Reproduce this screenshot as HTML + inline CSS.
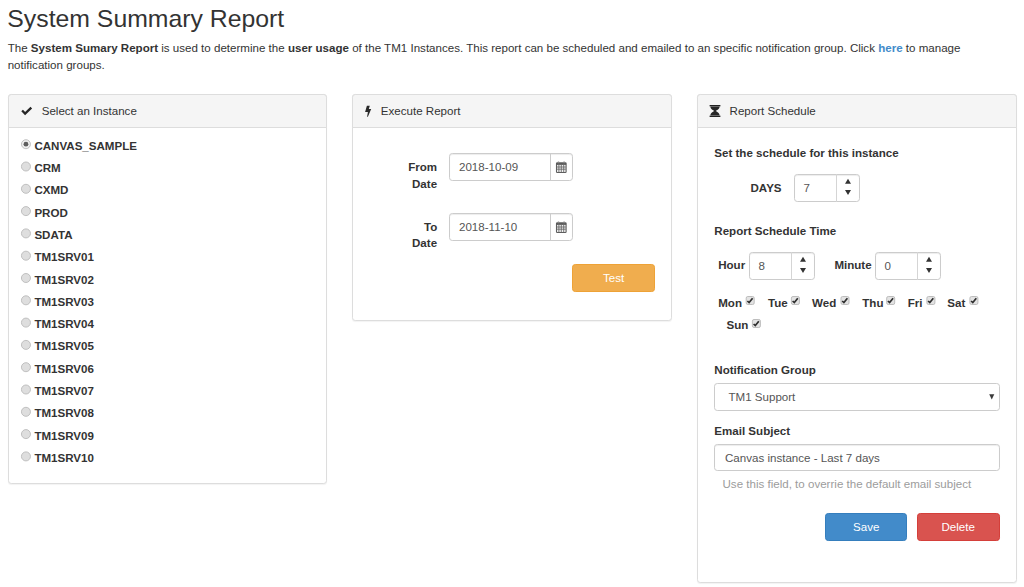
<!DOCTYPE html>
<html><head><meta charset="utf-8"><title>System Summary Report</title><style>
html,body{margin:0;padding:0;background:#fff;width:1024px;height:587px;overflow:hidden;position:relative}
body{font-family:"Liberation Sans",sans-serif;color:#333}
.t{position:absolute;white-space:nowrap;line-height:20px}
svg.ov{position:absolute;left:0;top:0;pointer-events:none}
</style></head><body>
<div class="t" style="left:7.3px;top:9px;font-size:24.8px;font-weight:normal;color:#333;">System Summary Report</div>
<div class="t" style="left:7.7px;top:38px;font-size:11.57px;font-weight:normal;color:#333;">The <b>System Sumary Report</b> is used to determine the <b>user usage</b> of the TM1 Instances. This report can be scheduled and emailed to an specific notification group. Click <b style="color:#428bca">here</b> to manage</div>
<div class="t" style="left:7.7px;top:55px;font-size:11.57px;font-weight:normal;color:#333;">notification groups.</div>
<div style="position:absolute;left:8px;top:94px;width:319px;height:390px;box-sizing:border-box;border:1px solid #ddd;border-radius:3.3px;background:#fff;box-shadow:0 1px 1px rgba(0,0,0,.05)"></div>
<div style="position:absolute;left:8px;top:94px;width:319px;height:34px;box-sizing:border-box;border:1px solid #ddd;border-radius:3.3px 3.3px 0 0;background:#f5f5f5"></div>
<div style="position:absolute;left:352px;top:94px;width:320px;height:227px;box-sizing:border-box;border:1px solid #ddd;border-radius:3.3px;background:#fff;box-shadow:0 1px 1px rgba(0,0,0,.05)"></div>
<div style="position:absolute;left:352px;top:94px;width:320px;height:34px;box-sizing:border-box;border:1px solid #ddd;border-radius:3.3px 3.3px 0 0;background:#f5f5f5"></div>
<div style="position:absolute;left:697px;top:94px;width:320px;height:489px;box-sizing:border-box;border:1px solid #ddd;border-radius:3.3px;background:#fff;box-shadow:0 1px 1px rgba(0,0,0,.05)"></div>
<div style="position:absolute;left:697px;top:94px;width:320px;height:34px;box-sizing:border-box;border:1px solid #ddd;border-radius:3.3px 3.3px 0 0;background:#f5f5f5"></div>
<div class="t" style="left:41.7px;top:101px;font-size:11.57px;font-weight:normal;color:#333;">Select an Instance</div>
<div class="t" style="left:380.8px;top:101px;font-size:11.57px;font-weight:normal;color:#333;">Execute Report</div>
<div class="t" style="left:729.6px;top:101px;font-size:11.57px;font-weight:normal;color:#333;">Report Schedule</div>
<div class="t" style="left:34.4px;top:136px;font-size:11.57px;font-weight:bold;color:#333;">CANVAS_SAMPLE</div>
<div class="t" style="left:34.4px;top:158px;font-size:11.57px;font-weight:bold;color:#333;">CRM</div>
<div class="t" style="left:34.4px;top:180px;font-size:11.57px;font-weight:bold;color:#333;">CXMD</div>
<div class="t" style="left:34.4px;top:203px;font-size:11.57px;font-weight:bold;color:#333;">PROD</div>
<div class="t" style="left:34.4px;top:225px;font-size:11.57px;font-weight:bold;color:#333;">SDATA</div>
<div class="t" style="left:34.4px;top:247px;font-size:11.57px;font-weight:bold;color:#333;">TM1SRV01</div>
<div class="t" style="left:34.4px;top:270px;font-size:11.57px;font-weight:bold;color:#333;">TM1SRV02</div>
<div class="t" style="left:34.4px;top:292px;font-size:11.57px;font-weight:bold;color:#333;">TM1SRV03</div>
<div class="t" style="left:34.4px;top:314px;font-size:11.57px;font-weight:bold;color:#333;">TM1SRV04</div>
<div class="t" style="left:34.4px;top:336px;font-size:11.57px;font-weight:bold;color:#333;">TM1SRV05</div>
<div class="t" style="left:34.4px;top:359px;font-size:11.57px;font-weight:bold;color:#333;">TM1SRV06</div>
<div class="t" style="left:34.4px;top:381px;font-size:11.57px;font-weight:bold;color:#333;">TM1SRV07</div>
<div class="t" style="left:34.4px;top:403px;font-size:11.57px;font-weight:bold;color:#333;">TM1SRV08</div>
<div class="t" style="left:34.4px;top:426px;font-size:11.57px;font-weight:bold;color:#333;">TM1SRV09</div>
<div class="t" style="left:34.4px;top:448px;font-size:11.57px;font-weight:bold;color:#333;">TM1SRV10</div>
<div class="t" style="left:408.2px;top:157px;font-size:11.57px;font-weight:bold;color:#333;">From</div>
<div class="t" style="left:412px;top:174px;font-size:11.57px;font-weight:bold;color:#333;">Date</div>
<div class="t" style="left:424px;top:217px;font-size:11.57px;font-weight:bold;color:#333;">To</div>
<div class="t" style="left:412px;top:233px;font-size:11.57px;font-weight:bold;color:#333;">Date</div>
<div style="position:absolute;left:449px;top:153px;width:124px;height:28px;box-sizing:border-box;border:1px solid #ccc;border-radius:3.3px;background:#fff;box-shadow:inset 0 1px 1px rgba(0,0,0,.075)"></div>
<div style="position:absolute;left:550px;top:153px;width:23px;height:28px;box-sizing:border-box;border-left:1px solid #ccc;"></div>
<div class="t" style="left:459px;top:157px;font-size:11.57px;font-weight:normal;color:#555;">2018-10-09</div>
<div style="position:absolute;left:449px;top:213px;width:124px;height:28px;box-sizing:border-box;border:1px solid #ccc;border-radius:3.3px;background:#fff;box-shadow:inset 0 1px 1px rgba(0,0,0,.075)"></div>
<div style="position:absolute;left:550px;top:213px;width:23px;height:28px;box-sizing:border-box;border-left:1px solid #ccc;"></div>
<div class="t" style="left:459px;top:217px;font-size:11.57px;font-weight:normal;color:#555;">2018-11-10</div>
<div style="position:absolute;left:572px;top:264px;width:83px;height:28px;box-sizing:border-box;background:#f0ad4e;border:1px solid #eea236;border-radius:3.3px"></div>
<div class="t" style="left:603px;top:268px;font-size:11.57px;font-weight:normal;color:#fff;">Test</div>
<div class="t" style="left:714.3px;top:143px;font-size:11.57px;font-weight:bold;color:#333;">Set the schedule for this instance</div>
<div class="t" style="left:750.5px;top:178px;font-size:11.57px;font-weight:bold;color:#333;">DAYS</div>
<div style="position:absolute;left:794px;top:174px;width:66px;height:28px;box-sizing:border-box;border:1px solid #ccc;border-radius:3.3px;background:#fff;box-shadow:inset 0 1px 1px rgba(0,0,0,.075)"></div>
<div style="position:absolute;left:836px;top:174px;width:1px;height:28px;box-sizing:border-box;background:#d5d5d5"></div>
<div class="t" style="left:803.5px;top:178px;font-size:11.57px;font-weight:normal;color:#555;">7</div>
<div class="t" style="left:714.3px;top:221px;font-size:11.57px;font-weight:bold;color:#333;">Report Schedule Time</div>
<div class="t" style="left:718.2px;top:255px;font-size:11.57px;font-weight:bold;color:#333;">Hour</div>
<div style="position:absolute;left:749px;top:252px;width:66px;height:28px;box-sizing:border-box;border:1px solid #ccc;border-radius:3.3px;background:#fff;box-shadow:inset 0 1px 1px rgba(0,0,0,.075)"></div>
<div style="position:absolute;left:791px;top:252px;width:1px;height:28px;box-sizing:border-box;background:#d5d5d5"></div>
<div class="t" style="left:758.5px;top:256px;font-size:11.57px;font-weight:normal;color:#555;">8</div>
<div class="t" style="left:834.4px;top:255px;font-size:11.57px;font-weight:bold;color:#333;">Minute</div>
<div style="position:absolute;left:875px;top:252px;width:66px;height:28px;box-sizing:border-box;border:1px solid #ccc;border-radius:3.3px;background:#fff;box-shadow:inset 0 1px 1px rgba(0,0,0,.075)"></div>
<div style="position:absolute;left:917px;top:252px;width:1px;height:28px;box-sizing:border-box;background:#d5d5d5"></div>
<div class="t" style="left:884.5px;top:256px;font-size:11.57px;font-weight:normal;color:#555;">0</div>
<div class="t" style="left:718.2px;top:293px;font-size:11.57px;font-weight:bold;color:#333;">Mon</div>
<div class="t" style="left:768.0px;top:293px;font-size:11.57px;font-weight:bold;color:#333;">Tue</div>
<div class="t" style="left:812.0px;top:293px;font-size:11.57px;font-weight:bold;color:#333;">Wed</div>
<div class="t" style="left:862.3px;top:293px;font-size:11.57px;font-weight:bold;color:#333;">Thu</div>
<div class="t" style="left:907.7px;top:293px;font-size:11.57px;font-weight:bold;color:#333;">Fri</div>
<div class="t" style="left:947.3px;top:293px;font-size:11.57px;font-weight:bold;color:#333;">Sat</div>
<div class="t" style="left:726.5px;top:315px;font-size:11.57px;font-weight:bold;color:#333;">Sun</div>
<div class="t" style="left:714.3px;top:360px;font-size:11.57px;font-weight:bold;color:#333;">Notification Group</div>
<div style="position:absolute;left:714px;top:383px;width:286px;height:28px;box-sizing:border-box;border:1px solid #ccc;border-radius:3.3px;background:#fff"></div>
<div class="t" style="left:728.5px;top:387px;font-size:11.57px;font-weight:normal;color:#555;">TM1 Support</div>
<div class="t" style="left:714.3px;top:421px;font-size:11.57px;font-weight:bold;color:#333;">Email Subject</div>
<div style="position:absolute;left:714px;top:444px;width:286px;height:27px;box-sizing:border-box;border:1px solid #ccc;border-radius:3.3px;background:#fff;box-shadow:inset 0 1px 1px rgba(0,0,0,.075)"></div>
<div class="t" style="left:725px;top:448px;font-size:11.57px;font-weight:normal;color:#555;">Canvas instance - Last 7 days</div>
<div class="t" style="left:722.5px;top:474px;font-size:11.57px;font-weight:normal;color:#9c9c9c;">Use this field, to overrie the default email subject</div>
<div style="position:absolute;left:824.5px;top:513px;width:82.5px;height:28px;box-sizing:border-box;background:#428bca;border:1px solid #357ebd;border-radius:3.3px"></div>
<div class="t" style="left:853px;top:517px;font-size:11.57px;font-weight:normal;color:#fff;">Save</div>
<div style="position:absolute;left:917px;top:513px;width:83px;height:28px;box-sizing:border-box;background:#d9534f;border:1px solid #d43f3a;border-radius:3.3px"></div>
<div class="t" style="left:941.5px;top:517px;font-size:11.57px;font-weight:normal;color:#fff;">Delete</div>
<svg class="ov" width="1024" height="587" viewBox="0 0 1024 587">
<path d="M22.1 110.5 L25.1 113.6 L31.3 107.6" stroke="#262626" stroke-width="2.3" fill="none"/>
<path d="M366.9 105.7 H369.8 L368.8 109.1 H371.2 L367.9 116.8 H367.1 L367.9 111.9 H365.1 Z" fill="#2a2a2a"/>
<g transform="translate(709 105)"><rect x="0.6" y="0" width="10.8" height="1.1" fill="#222"/><rect x="0.6" y="10.9" width="10.8" height="1.1" fill="#222"/><rect x="0.6" y="1.1" width="10.8" height="0.5" fill="#777"/><rect x="0.6" y="10.4" width="10.8" height="0.5" fill="#777"/><path d="M1.4 1.6 H10.6 C10.6 4.3 7.6 5.4 6.7 6 C7.6 6.6 10.6 7.7 10.6 10.4 H1.4 C1.4 7.7 4.4 6.6 5.3 6 C4.4 5.4 1.4 4.3 1.4 1.6 Z" fill="#262626"/></g>
<circle cx="25.95" cy="144.20" r="4.5" fill="#efefef" stroke="#c2c2c2" stroke-width="1"/><circle cx="25.95" cy="144.20" r="2.4" fill="#5e5e5e"/>
<circle cx="25.95" cy="166.50" r="4.5" fill="#dedede" stroke="#c0c0c0" stroke-width="1"/>
<circle cx="25.95" cy="188.80" r="4.5" fill="#dedede" stroke="#c0c0c0" stroke-width="1"/>
<circle cx="25.95" cy="211.10" r="4.5" fill="#dedede" stroke="#c0c0c0" stroke-width="1"/>
<circle cx="25.95" cy="233.40" r="4.5" fill="#dedede" stroke="#c0c0c0" stroke-width="1"/>
<circle cx="25.95" cy="255.70" r="4.5" fill="#dedede" stroke="#c0c0c0" stroke-width="1"/>
<circle cx="25.95" cy="278.00" r="4.5" fill="#dedede" stroke="#c0c0c0" stroke-width="1"/>
<circle cx="25.95" cy="300.30" r="4.5" fill="#dedede" stroke="#c0c0c0" stroke-width="1"/>
<circle cx="25.95" cy="322.60" r="4.5" fill="#dedede" stroke="#c0c0c0" stroke-width="1"/>
<circle cx="25.95" cy="344.90" r="4.5" fill="#dedede" stroke="#c0c0c0" stroke-width="1"/>
<circle cx="25.95" cy="367.20" r="4.5" fill="#dedede" stroke="#c0c0c0" stroke-width="1"/>
<circle cx="25.95" cy="389.50" r="4.5" fill="#dedede" stroke="#c0c0c0" stroke-width="1"/>
<circle cx="25.95" cy="411.80" r="4.5" fill="#dedede" stroke="#c0c0c0" stroke-width="1"/>
<circle cx="25.95" cy="434.10" r="4.5" fill="#dedede" stroke="#c0c0c0" stroke-width="1"/>
<circle cx="25.95" cy="456.40" r="4.5" fill="#dedede" stroke="#c0c0c0" stroke-width="1"/>
<g transform="translate(555.8 161)"><rect x="0.7" y="1.9" width="9.6" height="9.6" rx="0.7" fill="#f2f2f2" stroke="#5e5e5e" stroke-width="1.1"/><rect x="0.7" y="2" width="9.6" height="1.9" fill="#5a5a5a"/><rect x="2" y="0.5" width="1.4" height="1.8" fill="#888"/><rect x="7.6" y="0.5" width="1.4" height="1.8" fill="#888"/><path d="M3.1 4 V11 M5.5 4 V11 M7.9 4 V11 M1 6 H10 M1 8.2 H10" stroke="#6a6a6a" stroke-width="0.9"/></g>
<g transform="translate(555.8 221)"><rect x="0.7" y="1.9" width="9.6" height="9.6" rx="0.7" fill="#f2f2f2" stroke="#5e5e5e" stroke-width="1.1"/><rect x="0.7" y="2" width="9.6" height="1.9" fill="#5a5a5a"/><rect x="2" y="0.5" width="1.4" height="1.8" fill="#888"/><rect x="7.6" y="0.5" width="1.4" height="1.8" fill="#888"/><path d="M3.1 4 V11 M5.5 4 V11 M7.9 4 V11 M1 6 H10 M1 8.2 H10" stroke="#6a6a6a" stroke-width="0.9"/></g>
<path d="M848.0 178.8 L851.0 183.8 H845.0 Z M848.0 194.9 L851.0 189.9 H845.0 Z" fill="#333"/>
<path d="M803.0 256.8 L806.0 261.8 H800.0 Z M803.0 272.9 L806.0 267.9 H800.0 Z" fill="#333"/>
<path d="M929.0 256.8 L932.0 261.8 H926.0 Z M929.0 272.9 L932.0 267.9 H926.0 Z" fill="#333"/>
<g transform="translate(745.7 296)"><rect x="0.5" y="0.5" width="8" height="8" rx="1.6" fill="#e3e3e3" stroke="#bdbdbd" stroke-width="1"/><path d="M1.7 5.0 L3.4 6.6 L6.9 2.3" stroke="#2e2e2e" stroke-width="1.7" fill="none"/></g>
<g transform="translate(790.9 296)"><rect x="0.5" y="0.5" width="8" height="8" rx="1.6" fill="#e3e3e3" stroke="#bdbdbd" stroke-width="1"/><path d="M1.7 5.0 L3.4 6.6 L6.9 2.3" stroke="#2e2e2e" stroke-width="1.7" fill="none"/></g>
<g transform="translate(840.5 296)"><rect x="0.5" y="0.5" width="8" height="8" rx="1.6" fill="#e3e3e3" stroke="#bdbdbd" stroke-width="1"/><path d="M1.7 5.0 L3.4 6.6 L6.9 2.3" stroke="#2e2e2e" stroke-width="1.7" fill="none"/></g>
<g transform="translate(886.2 296)"><rect x="0.5" y="0.5" width="8" height="8" rx="1.6" fill="#e3e3e3" stroke="#bdbdbd" stroke-width="1"/><path d="M1.7 5.0 L3.4 6.6 L6.9 2.3" stroke="#2e2e2e" stroke-width="1.7" fill="none"/></g>
<g transform="translate(926.4 296)"><rect x="0.5" y="0.5" width="8" height="8" rx="1.6" fill="#e3e3e3" stroke="#bdbdbd" stroke-width="1"/><path d="M1.7 5.0 L3.4 6.6 L6.9 2.3" stroke="#2e2e2e" stroke-width="1.7" fill="none"/></g>
<g transform="translate(969.4 296)"><rect x="0.5" y="0.5" width="8" height="8" rx="1.6" fill="#e3e3e3" stroke="#bdbdbd" stroke-width="1"/><path d="M1.7 5.0 L3.4 6.6 L6.9 2.3" stroke="#2e2e2e" stroke-width="1.7" fill="none"/></g>
<g transform="translate(751.9 319)"><rect x="0.5" y="0.5" width="8" height="8" rx="1.6" fill="#e3e3e3" stroke="#bdbdbd" stroke-width="1"/><path d="M1.7 5.0 L3.4 6.6 L6.9 2.3" stroke="#2e2e2e" stroke-width="1.7" fill="none"/></g>
<path d="M989.2 394.3 H994.3 L991.75 399.5 Z" fill="#3a3a3a"/>
</svg>
</body></html>
